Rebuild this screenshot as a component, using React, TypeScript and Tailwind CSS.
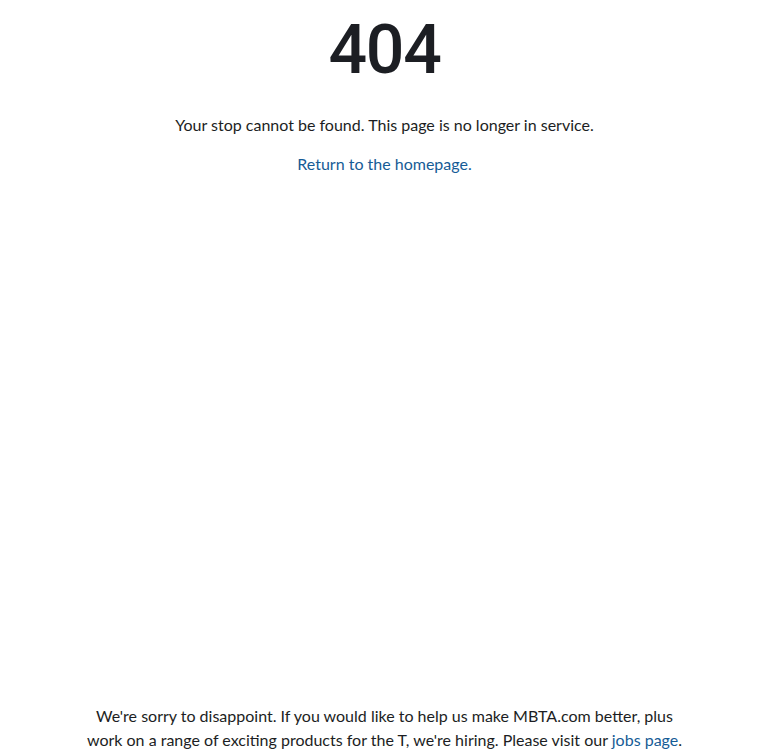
import React from "react";

export default function App() {
  return (
    <div
      className="min-h-screen flex flex-col justify-between bg-white text-[#1c1e23]"
      style={{ fontFamily: "Lato, 'Noto Sans', sans-serif" }}
    >
      <div className="flex flex-col items-center pt-[14px]">
        <h1
          className="text-[68px] leading-[72px] font-medium tracking-[-0.02em]"
          style={{ fontFamily: "Roboto, 'Liberation Sans', sans-serif" }}
        >
          404
        </h1>
        <p className="mt-[27px] text-[16px] leading-6">
          Your stop cannot be found. This page is no longer in service.
        </p>
        <a href="#" className="mt-[15px] text-[16px] leading-6 text-[#165c96]">
          Return to the homepage.
        </a>
      </div>
      <div className="flex justify-center">
        <p className="text-center text-[16px] leading-6 max-w-[600px] mb-[-1px]">
          We're sorry to disappoint. If you would like to help us make MBTA.com better, plus work on a range of exciting products for the T, we're hiring. Please visit our{" "}
          <a href="#" className="text-[#165c96]">jobs page</a>.
        </p>
      </div>
    </div>
  );
}
